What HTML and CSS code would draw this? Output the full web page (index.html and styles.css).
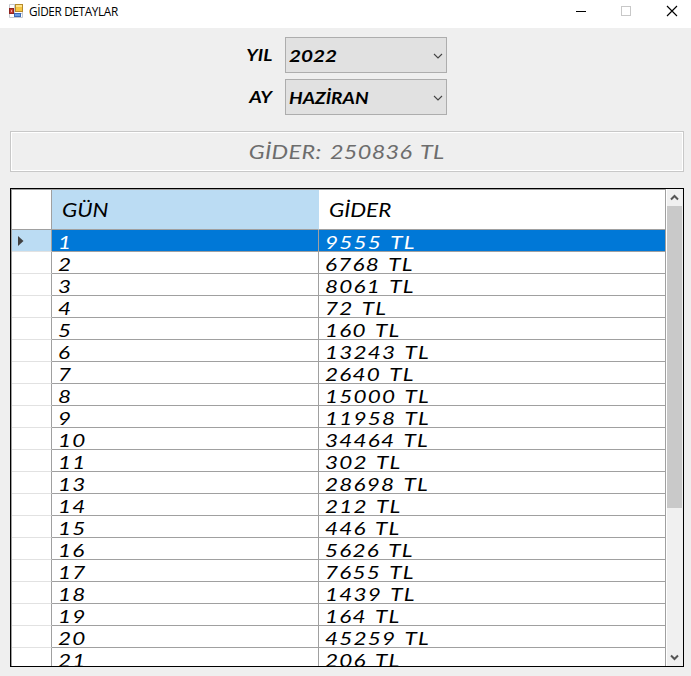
FILE: index.html
```
<!DOCTYPE html>
<html lang="tr">
<head>
<meta charset="utf-8">
<title>GİDER DETAYLAR</title>
<link rel="stylesheet" href="styles.css">
</head>
<body>
<header class="titlebar">
  <svg class="app-icon" width="14" height="14" viewBox="0 0 14 14">
    <path d="M.5.5h13v13H.5zM5.5.5v13M.5 9.5h13M.5 4.5h5" fill="#fff" stroke="#c5c9cf"/>
    <rect x="6.5" y=".5" width="7" height="7" fill="#f6c744" stroke="#b58a2b"/>
    <path d="M7 1h6v2H7z" fill="#ffe48c"/>
    <rect x=".5" y="4.5" width="4" height="5" fill="#c83a30" stroke="#8d2520"/>
    <path d="M2 6h1v2H2z" fill="#f0a49b"/>
    <rect x="5.500" y="9.500" width="6" height="3" fill="#6b9de5" stroke="#3c69b5"/>
  </svg>
  <h1 class="title">GİDER DETAYLAR</h1>
  <svg class="window-buttons" width="102" height="12" viewBox="0 0 102 12" fill="none">
    <path d="M0 6.500h10" stroke="#000"/>
    <rect x="45.500" y="1.500" width="9" height="9" stroke="#c8c8c8"/>
    <path d="M91 1l10 10M101 1L91 11" stroke="#000" stroke-width="1.150"/>
  </svg>
</header>
<main>
  <form class="filters">
    <label class="label"><span class="hand year">YIL</span></label>
    <div class="combo"><span class="hand value-year">2022</span><svg width="10" height="6" viewBox="0 0 10 6"><path d="M1 1l4 4 4-4" fill="none" stroke="#444" stroke-width="1.100"/></svg></div>
    <label class="label"><span class="hand month">AY</span></label>
    <div class="combo"><span class="hand value-month">HAZİRAN</span><svg width="10" height="6" viewBox="0 0 10 6"><path d="M1 1l4 4 4-4" fill="none" stroke="#444" stroke-width="1.100"/></svg></div>
  </form>
  <div class="total"><span class="hand">GİDER: 250836 TL</span></div>
  <section class="grid">
    <div class="rows" id="rows">
      <div class="row head"><div class="marker"></div><div class="cell active"><span class="hand">GÜN</span></div><div class="cell"><span class="hand">GİDER</span></div></div>
    </div>
    <div class="scrollbar">
      <svg width="15" height="17" viewBox="0 0 15 17"><path d="M4 10.500l3.500-3.500 3.500 3.500" fill="none" stroke="#555" stroke-width="2"/></svg>
      <div class="thumb"></div>
      <svg class="down" width="15" height="17" viewBox="0 0 15 17"><path d="M4 6.500l3.500 3.500 3.500-3.500" fill="none" stroke="#555" stroke-width="2"/></svg>
    </div>
  </section>
</main>
<script src="script.js"></script>
</body>
</html>
```
FILE: styles.css
```
* { box-sizing: border-box; }
body { margin: 0; height: 676px; overflow: hidden; background: #efefef; color: #000; font-family: "Lato", sans-serif; }
.titlebar { display: flex; height: 28px; padding: 4px 13px 0 9px; background: #fff; }
.title { margin: 0 auto 0 6px; font: 400 12px/16px "Open Sans", sans-serif; letter-spacing: -.35px; transform: scaleX(.98); transform-origin: left; }
.window-buttons { margin-top: 1px; }
.hand { display: block; width: max-content; font-size: 18px; font-style: italic; line-height: 18px; letter-spacing: .96px; word-spacing: 2px; white-space: pre; transform: scaleX(1.25); transform-origin: left center; }
.filters { display: grid; grid-template-columns: 272px 162px; grid-template-rows: 36px 36px; column-gap: 13px; row-gap: 6px; padding-top: 9px; }
.label { display: flex; align-items: center; justify-content: flex-end; }
.filters .hand { font-size: 17px; font-weight: 700; letter-spacing: 0; }
.label .hand { transform-origin: right center; }
.label .year { transform: scaleX(1.12); }
.label .month { transform: scaleX(1.14); }
.combo { display: flex; align-items: center; justify-content: space-between; padding: 1px 3px 0 3px; border: 1px solid #adadad; background: #e1e1e1; }
.combo .value-year { transform: scaleX(1.22); }
.combo .value-month { transform: scaleX(1.12); }
.total { display: flex; align-items: center; justify-content: center; height: 41px; margin: 16px 7px 0 10px; border: 1px solid #c8c8c8; outline: 1px solid #fff; outline-offset: -2px; color: #6d6d6d; }
.total .hand { font-size: 19px; letter-spacing: .3px; transform: scaleX(1.23); transform-origin: center; }
.grid { display: flex; height: 479px; margin: 16px 7px 0 10px; border: 1px solid #000; background: #fff; overflow: hidden; }
.rows { width: 655px; border-top: 1px solid #a0a0a0; border-left: 1px solid #a0a0a0; overflow: hidden; }
.row { display: grid; grid-template-columns: 40px 267px 347px; height: 22px; }
.marker { display: flex; align-items: center; padding-left: 6px; border-right: 1px solid #a0a0a0; border-bottom: 1px solid #e2e2e2; }
.cell { padding: 3px 0 0 6px; border-right: 1px solid #a0a0a0; border-bottom: 1px solid #a0a0a0; }
.head { height: 40px; }
.head .marker { border-bottom-color: #a0a0a0; }
.head .cell { padding: 11px 0 0 10px; }
.head .hand { font-size: 19px; letter-spacing: 0; transform: scaleX(1.18); }
.head .active { background: #bbdcf3; border-right-color: #bbdcf3; }
.selected .cell { background: #0078d7; color: #fff; }
.selected .marker { background: #bbdcf3; }
.scrollbar { display: flex; flex-direction: column; width: 16px; margin-left: 1px; background: #f0f0f0; }
.thumb { width: 15px; height: 302px; background: #c9c9c9; }
.down { margin-top: auto; }
```
FILE: script.js
```
const entries = [
  [1, 9555], [2, 6768], [3, 8061], [4, 72], [5, 160], [6, 13243], [7, 2640],
  [8, 15000], [9, 11958], [10, 34464], [11, 302], [13, 28698], [14, 212],
  [15, 446], [16, 5626], [17, 7655], [18, 1439], [19, 164], [20, 45259], [21, 206]
];
const arrow = '<svg width="6" height="10" viewBox="0 0 6 10"><path d="M0 0l5.500 5L0 10z" fill="#404040"/></svg>';
document.getElementById("rows").insertAdjacentHTML("beforeend", entries.map(([day, amount], i) =>
  `<div class="row${i === 0 ? " selected" : ""}"><div class="marker">${i === 0 ? arrow : ""}</div><div class="cell"><span class="hand">${day}</span></div><div class="cell"><span class="hand">${amount} TL</span></div></div>`
).join(""));
```
